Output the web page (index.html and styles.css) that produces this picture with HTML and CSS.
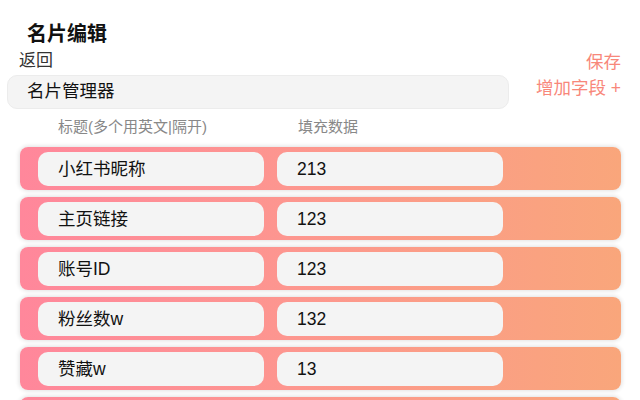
FILE: index.html
```html
<!DOCTYPE html>
<html lang="zh">
<head>
<meta charset="utf-8">
<link rel="stylesheet" href="styles.css">
</head>
<body>
<div class="page">
  <h1 class="title">名片编辑</h1>
  <div class="top">
    <div class="left">
      <div class="back">返回</div>
      <div class="name-input">名片管理器</div>
    </div>
    <div class="actions">
      <div class="action">保存</div>
      <div class="action">增加字段 +</div>
    </div>
  </div>
  <div class="heads">
    <div class="head-a">标题(多个用英文|隔开)</div>
    <div class="head-b">填充数据</div>
  </div>
  <div class="rows">
    <div class="row"><div class="field">小红书昵称</div><div class="field">213</div></div>
    <div class="row"><div class="field">主页链接</div><div class="field">123</div></div>
    <div class="row"><div class="field">账号ID</div><div class="field">123</div></div>
    <div class="row"><div class="field">粉丝数w</div><div class="field">132</div></div>
    <div class="row"><div class="field">赞藏w</div><div class="field">13</div></div>
    <div class="row"><div class="field"></div><div class="field"></div></div>
  </div>
</div>
</body>
</html>
```
FILE: styles.css
```css
html, body {
  margin: 0;
  padding: 0;
  background: #fff;
  overflow: hidden;
  height: 400px;
}
body {
  font-family: "Liberation Sans", "Noto Sans CJK SC", sans-serif;
  color: #111;
}
.page {
  padding-top: 19px;
}
.title {
  margin: 0 0 0 27px;
  font-size: 20px;
  line-height: 30px;
  font-weight: bold;
}
.top {
  display: flex;
  justify-content: space-between;
  padding: 0 19px 0 7px;
}
.left {
  width: 502px;
}
.back {
  margin-left: 12px;
  font-size: 17px;
  line-height: 24px;
  color: #333;
}
.name-input {
  margin-top: 2px;
  box-sizing: border-box;
  height: 34px;
  background: #f4f4f4;
  border: 1px solid #ececec;
  border-radius: 10px;
  padding-left: 19px;
  font-size: 17.5px;
  line-height: 31px;
}
.actions {
  display: flex;
  flex-direction: column;
  align-items: flex-end;
  padding-top: 0;
}
.action {
  color: #f8877a;
  font-size: 17.5px;
  line-height: 26px;
}
.heads {
  display: flex;
  padding-left: 58px;
  margin-top: 5px;
  font-size: 15px;
  line-height: 26px;
  color: #888;
}
.head-a {
  width: 240px;
}
.rows {
  display: flex;
  flex-direction: column;
  gap: 7px;
  margin: 7px 19px 0 20px;
}
.row {
  height: 43px;
  flex: none;
  box-sizing: border-box;
  border-radius: 8px;
  background: linear-gradient(90deg, #ff879b 0%, #fd968f 45%, #f9a67b 100%);
  box-shadow: 0 0 4px 1px rgba(0, 0, 0, 0.12);
  display: flex;
  align-items: center;
  gap: 13px;
  padding-left: 18px;
}
.field {
  width: 226px;
  height: 34px;
  box-sizing: border-box;
  background: #f4f4f4;
  border-radius: 10px;
  padding-left: 20px;
  font-size: 17.5px;
  line-height: 34px;
  color: #111;
}
```
